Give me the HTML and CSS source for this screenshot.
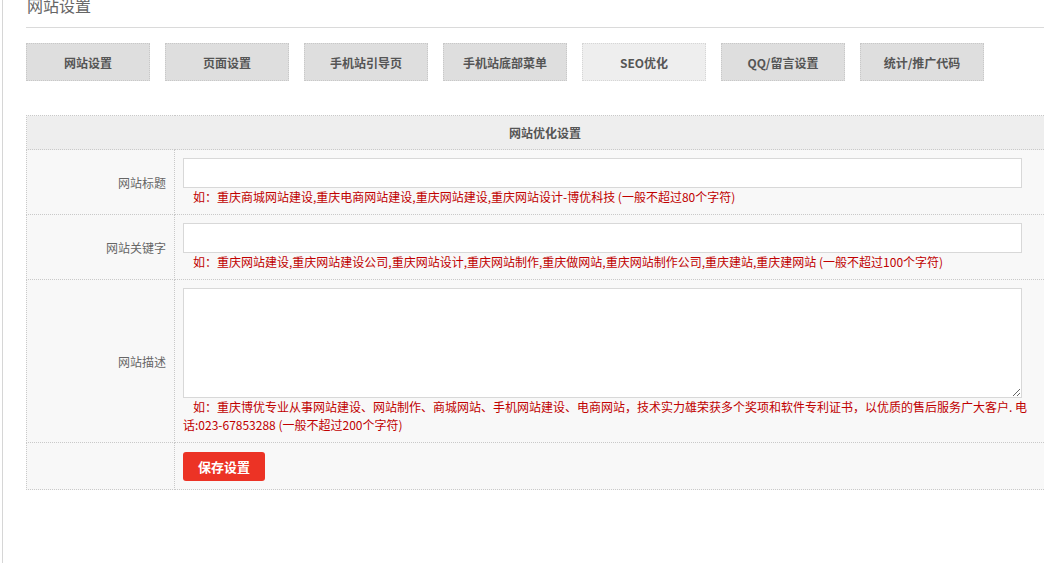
FILE: index.html
```html
<!DOCTYPE html>
<html lang="zh-CN">
<head>
<meta charset="utf-8">
<title>网站设置</title>
<link rel="stylesheet" href="styles.css">
</head>
<body>
<div class="frame">
  <div class="edge"></div>
  <div class="main">
    <h2 class="page-title">网站设置</h2>
    <div class="tabs">
      <div class="tab">网站设置</div>
      <div class="tab">页面设置</div>
      <div class="tab">手机站引导页</div>
      <div class="tab">手机站底部菜单</div>
      <div class="tab active">SEO优化</div>
      <div class="tab">QQ/留言设置</div>
      <div class="tab">统计/推广代码</div>
    </div>
    <table class="form-table">
      <tr class="head">
        <th colspan="2">网站优化设置</th>
      </tr>
      <tr>
        <td class="label">网站标题</td>
        <td class="field">
          <input class="text-input" type="text">
          <div class="hint indent">如：重庆商城网站建设,重庆电商网站建设,重庆网站建设,重庆网站设计-博优科技 (一般不超过80个字符)</div>
        </td>
      </tr>
      <tr>
        <td class="label">网站关键字</td>
        <td class="field">
          <input class="text-input" type="text">
          <div class="hint indent">如：重庆网站建设,重庆网站建设公司,重庆网站设计,重庆网站制作,重庆做网站,重庆网站制作公司,重庆建站,重庆建网站 (一般不超过100个字符)</div>
        </td>
      </tr>
      <tr>
        <td class="label">网站描述</td>
        <td class="field">
          <textarea class="text-area"></textarea>
          <div class="hint indent">如：重庆博优专业从事网站建设、网站制作、商城网站、手机网站建设、电商网站，技术实力雄荣获多个奖项和软件专利证书，以优质的售后服务广大客户. 电<br>话:023-67853288 (一般不超过200个字符)</div>
        </td>
      </tr>
      <tr>
        <td class="label"></td>
        <td class="field">
          <button class="save-btn" type="button">保存设置</button>
        </td>
      </tr>
    </table>
  </div>
</div>
</body>
</html>
```

FILE: styles.css
```css
html, body {
  margin: 0;
  padding: 0;
  background: #fff;
  overflow: hidden;
  font-family: "Noto Sans CJK SC", "Liberation Sans", sans-serif;
  font-size: 12px;
  color: #555;
}

.frame {
  display: flex;
  width: 1044px;
  height: 563px;
  overflow: hidden;
}

.edge {
  flex: 0 0 2px;
  border-right: 1px solid #d6d6d6;
}

.main {
  flex: 1 0 auto;
  padding-left: 23px;
  width: 1040px;
}

.page-title {
  margin: -7px 0 0 0;
  padding: 0 0 0 1px;
  height: 35px;
  line-height: 24px;
  font-size: 16px;
  font-weight: normal;
  color: #666;
  border-bottom: 1px solid #dadada;
  box-sizing: border-box;
}

.tabs {
  display: flex;
  gap: 15px;
  margin-top: 15px;
}

.tab {
  width: 124px;
  height: 38px;
  box-sizing: border-box;
  background: #dedede;
  border: 1px dotted #c8c8c8;
  display: flex;
  align-items: center;
  justify-content: center;
  font-weight: bold;
  font-size: 12px;
  color: #555;
}

.tab.active {
  background: #eeeeee;
  border-color: #d6d6d6;
}

.form-table {
  margin-top: 34px;
  width: 1038px;
  border-collapse: collapse;
  background: #f8f8f8;
}

.form-table th,
.form-table td {
  border: 1px dotted #c9c9c9;
}

.head th {
  height: 33px;
  background: #eeeeee;
  font-size: 12px;
  font-weight: bold;
  color: #555;
  text-align: center;
  padding: 0;
}

.label {
  width: 139px;
  text-align: right;
  padding: 0 8px 0 0;
  color: #666;
  font-size: 12px;
  vertical-align: middle;
}

.field {
  padding: 8px 8px 8px 8px;
  vertical-align: top;
}

.text-input {
  display: block;
  width: 839px;
  height: 30px;
  box-sizing: border-box;
  margin: 0;
  border: 1px solid #d8d8d8;
  background: #fff;
  outline: none;
}

.text-area {
  display: block;
  width: 839px;
  height: 110px;
  box-sizing: border-box;
  margin: 0;
  border: 1px solid #d8d8d8;
  background: #fff;
  resize: both;
  outline: none;
}

.hint {
  margin-top: 0;
  color: #c00000;
  font-size: 12px;
  line-height: 18px;
  white-space: nowrap;
}

.hint.indent {
  text-indent: 10px;
}

.save-btn {
  display: block;
  width: 82px;
  height: 29px;
  margin: 1px 0 0 0;
  border: none;
  border-radius: 3px;
  background: #ec3325;
  color: #fff;
  font-family: "Noto Sans CJK SC", sans-serif;
  font-size: 13px;
  font-weight: bold;
  cursor: pointer;
}
```
